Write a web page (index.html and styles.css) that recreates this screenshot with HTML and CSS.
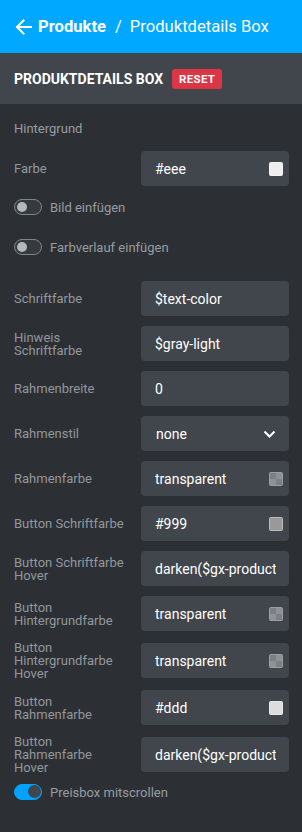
FILE: index.html
```html
<!DOCTYPE html>
<html lang="de">
<head>
  <meta charset="UTF-8">
  <meta name="viewport" content="width=device-width, initial-scale=1.0">
  <title>Produktdetails Box</title>
  <link rel="stylesheet" href="styles.css">
</head>
<body>
  <div class="topbar">
    <svg class="back" width="17" height="16" viewBox="0 0 17 16">
      <path d="M16 8H2M8.5 1.5L2 8l6.5 6.5" fill="none" stroke="#fff" stroke-width="2" stroke-linecap="square"/>
    </svg>
    <span class="crumb-parent">Produkte</span>
    <span class="crumb-sep">/</span>
    <span class="crumb-current">Produktdetails Box</span>
  </div>

  <div class="panel-head">
    <h1>Produktdetails Box</h1>
    <span class="badge">Reset</span>
  </div>

  <div class="panel-body">
    <div class="group-title">Hintergrund</div>

    <div class="field first">
      <label>Farbe</label>
      <div class="input"><span>#eee</span><i class="swatch" style="background:#eee"></i></div>
    </div>

    <div class="toggle-row t1">
      <span class="toggle"></span>
      <span class="toggle-label">Bild einfügen</span>
    </div>
    <div class="toggle-row t2">
      <span class="toggle"></span>
      <span class="toggle-label">Farbverlauf einfügen</span>
    </div>

    <div class="fields">
      <label>Schriftfarbe</label>
      <div class="input"><span>$text-color</span></div>

      <label>Hinweis Schriftfarbe</label>
      <div class="input"><span>$gray-light</span></div>

      <label>Rahmenbreite</label>
      <div class="input"><span>0</span></div>

      <label>Rahmenstil</label>
      <div class="input select"><span>none</span>
        <svg class="chevron" width="13" height="8" viewBox="0 0 13 8"><path d="M1.5 1.5l5 5 5-5" fill="none" stroke="#fff" stroke-width="2"/></svg>
      </div>

      <label>Rahmenfarbe</label>
      <div class="input"><span>transparent</span><i class="swatch checker"></i></div>

      <label>Button Schriftfarbe</label>
      <div class="input"><span>#999</span><i class="swatch" style="background:#999"></i></div>

      <label>Button Schriftfarbe Hover</label>
      <div class="input"><span>darken($gx-product-details-box-button-color, 10%)</span></div>

      <label>Button Hintergrundfarbe</label>
      <div class="input"><span>transparent</span><i class="swatch checker"></i></div>

      <label>Button Hintergrundfarbe Hover</label>
      <div class="input"><span>transparent</span><i class="swatch checker"></i></div>

      <label>Button Rahmenfarbe</label>
      <div class="input"><span>#ddd</span><i class="swatch" style="background:#ddd"></i></div>

      <label>Button Rahmenfarbe Hover</label>
      <div class="input"><span>darken($gx-product-details-box-button-border-color, 10%)</span></div>
    </div>

    <div class="toggle-row t3">
      <span class="toggle on"></span>
      <span class="toggle-label">Preisbox mitscrollen</span>
    </div>
  </div>
</body>
</html>
```

FILE: styles.css
```css
body {
    margin: 0;
    font-family: Roboto, "Liberation Sans", sans-serif;
    background-color: #2c3034;
    color: #fff;
    height: 832px;
    overflow: hidden;
}

.topbar {
    height: 53px;
    background-color: #00a9ff;
    display: flex;
    align-items: center;
    padding: 0 15px;
    font-size: 16.6px;
    box-sizing: border-box;
}
.topbar .back {
    margin-right: 6px;
    flex-shrink: 0;
}
.crumb-parent {
    font-weight: 700;
}
.crumb-sep {
    margin: 0 8px 0 9px;
}

.panel-head {
    height: 51px;
    background-color: #41464c;
    display: flex;
    align-items: center;
    padding: 0 14px;
}
.panel-head h1 {
    margin: 0;
    font-size: 14px;
    font-weight: 700;
    text-transform: uppercase;
}
.badge {
    margin-left: 9px;
    background-color: #dc3545;
    color: #fff;
    font-size: 11.5px;
    font-weight: 700;
    text-transform: uppercase;
    padding: 0 7px;
    height: 20px;
    line-height: 20px;
    border-radius: 3px;
    letter-spacing: 0.3px;
}

.panel-body {
    padding: 14px 13px 0 14px;
}
.group-title {
    font-size: 13px;
    color: #979ca2;
    line-height: 16px;
    margin-top: 3px;
}

.field,
.fields {
    display: grid;
    grid-template-columns: 127px 148px;
    align-items: center;
}
.field.first {
    margin-top: 14px;
}
.fields {
    row-gap: 10px;
    margin-top: 24px;
}
label {
    font-size: 13px;
    line-height: 13px;
    color: #92979d;
    padding-right: 15px;
}

.input {
    height: 35px;
    background-color: #41464c;
    border-radius: 4px;
    display: flex;
    align-items: center;
    padding: 0 13px 0 14px;
    font-size: 14px;
    overflow: hidden;
    box-sizing: border-box;
}
.input span {
    flex: 1;
    white-space: nowrap;
    overflow: hidden;
}
.input.select {
    padding-left: 15px;
    padding-right: 13px;
}
.swatch {
    width: 14px;
    height: 14px;
    flex-shrink: 0;
    border-radius: 2px;
    box-sizing: border-box;
    border: 1px solid rgba(255, 255, 255, 0.35);
    margin: 0 -7px 0 6px;
}
.swatch.checker {
    border-color: rgba(255, 255, 255, 0.12);
    background:
        linear-gradient(#7c8084, #7c8084) 0 0 / 50% 50% no-repeat,
        linear-gradient(#7c8084, #7c8084) 100% 100% / 50% 50% no-repeat,
        #8e9296;
}

.toggle-row {
    display: flex;
    align-items: center;
    height: 20px;
}
.toggle-row.t1 {
    margin-top: 11px;
}
.toggle-row.t2 {
    margin-top: 20px;
}
.toggle-row.t3 {
    margin-top: 8px;
}
.toggle {
    position: relative;
    width: 28px;
    height: 16px;
    border: 1.5px solid #80868c;
    border-radius: 8px;
    box-sizing: border-box;
    background-color: #353a3f;
    margin-right: 8px;
}
.toggle::after {
    content: "";
    position: absolute;
    left: 1.5px;
    top: 1.5px;
    width: 10px;
    height: 10px;
    border-radius: 50%;
    background-color: #b3b8bd;
}
.toggle.on {
    background-color: #00a2ff;
    border-color: #00a2ff;
}
.toggle.on::after {
    left: auto;
    right: 0;
    top: 0;
    width: 13px;
    height: 13px;
    background-color: #41464c;
}
.toggle-label {
    font-size: 13px;
    color: #979ca2;
}
```
